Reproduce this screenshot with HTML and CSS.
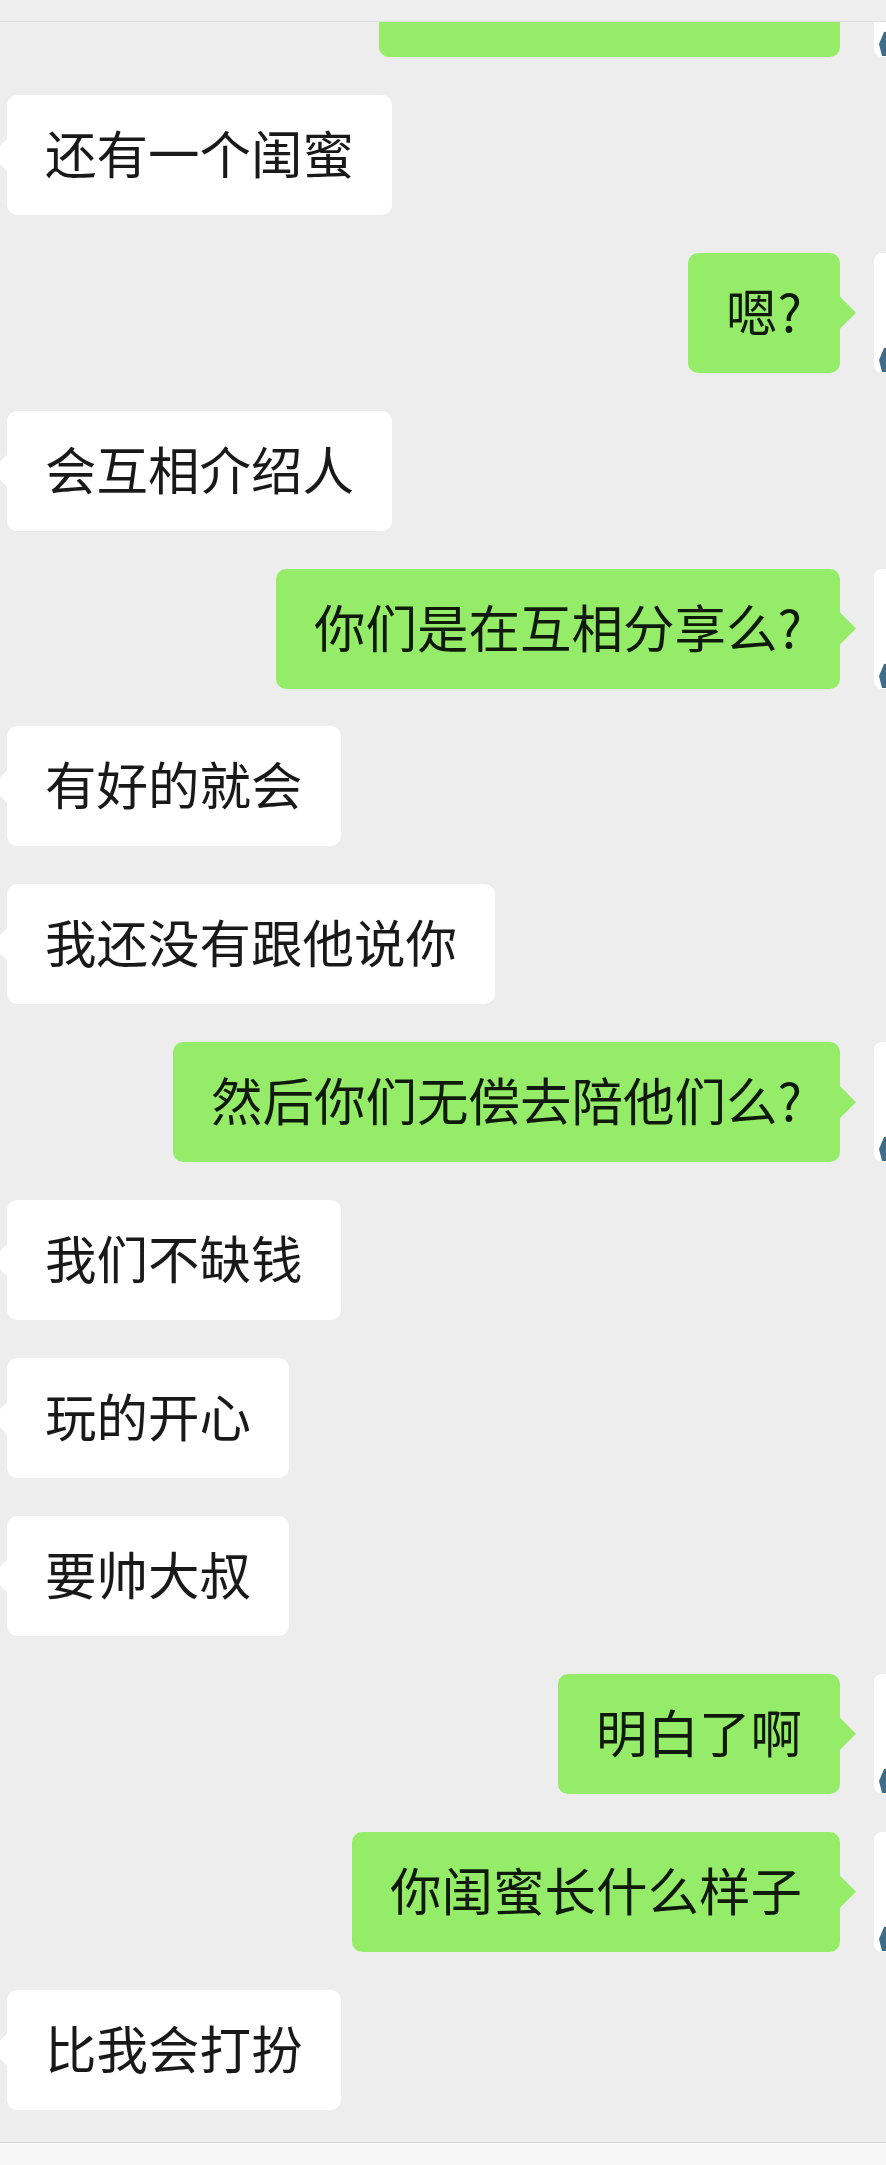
FILE: index.html
```html
<!DOCTYPE html>
<html lang="zh-CN">
<head>
    <meta charset="UTF-8">
    <title>聊天</title>
    <link rel="stylesheet" href="styles.css">
</head>
<body>

<div class="top-bar"></div>

<div class="viewport">
    <div class="chat">
        <div class="row me">
            <div class="bubble">是啊，你猜猜呢?</div>
            <div class="avatar"><svg viewBox="0 0 120 120"><rect width="120" height="120" rx="8" fill="#fff"/><polygon points="5,107 10,95 21,93 25,106 19,119 8,119" fill="#3f6c88"/></svg></div>
        </div>
        <div class="row">
            <div class="bubble">还有一个闺蜜</div>
        </div>
        <div class="row me">
            <div class="bubble">嗯?</div>
            <div class="avatar"><svg viewBox="0 0 120 120"><rect width="120" height="120" rx="8" fill="#fff"/><polygon points="5,107 10,95 21,93 25,106 19,119 8,119" fill="#3f6c88"/></svg></div>
        </div>
        <div class="row">
            <div class="bubble">会互相介绍人</div>
        </div>
        <div class="row me">
            <div class="bubble">你们是在互相分享么?</div>
            <div class="avatar"><svg viewBox="0 0 120 120"><rect width="120" height="120" rx="8" fill="#fff"/><polygon points="5,107 10,95 21,93 25,106 19,119 8,119" fill="#3f6c88"/></svg></div>
        </div>
        <div class="row">
            <div class="bubble">有好的就会</div>
        </div>
        <div class="row">
            <div class="bubble">我还没有跟他说你</div>
        </div>
        <div class="row me">
            <div class="bubble">然后你们无偿去陪他们么?</div>
            <div class="avatar"><svg viewBox="0 0 120 120"><rect width="120" height="120" rx="8" fill="#fff"/><polygon points="5,107 10,95 21,93 25,106 19,119 8,119" fill="#3f6c88"/></svg></div>
        </div>
        <div class="row">
            <div class="bubble">我们不缺钱</div>
        </div>
        <div class="row">
            <div class="bubble">玩的开心</div>
        </div>
        <div class="row">
            <div class="bubble">要帅大叔</div>
        </div>
        <div class="row me">
            <div class="bubble">明白了啊</div>
            <div class="avatar"><svg viewBox="0 0 120 120"><rect width="120" height="120" rx="8" fill="#fff"/><polygon points="5,107 10,95 21,93 25,106 19,119 8,119" fill="#3f6c88"/></svg></div>
        </div>
        <div class="row me">
            <div class="bubble">你闺蜜长什么样子</div>
            <div class="avatar"><svg viewBox="0 0 120 120"><rect width="120" height="120" rx="8" fill="#fff"/><polygon points="5,107 10,95 21,93 25,106 19,119 8,119" fill="#3f6c88"/></svg></div>
        </div>
        <div class="row">
            <div class="bubble">比我会打扮</div>
        </div>
    </div>
</div>

<div class="input-bar"></div>

</body>
</html>
```

FILE: styles.css
```css
* {
    margin: 0;
    padding: 0;
    box-sizing: border-box;
}

html, body {
    width: 886px;
    height: 2165px;
    overflow: hidden;
}

body {
    display: flex;
    flex-direction: column;
    background-color: #ededed;
    font-family: "Noto Sans CJK SC", "Noto Sans", sans-serif;
}

/* 顶部标题栏，只露出一点 */
.top-bar {
    flex-shrink: 0;
    height: 22px;
    background-color: #efefef;
    border-bottom: 1px solid #dedede;
}

/* 聊天区域，上面一条消息被标题栏挡住 */
.viewport {
    flex: 1;
    overflow: hidden;
}

.chat {
    display: flex;
    flex-direction: column;
    gap: 37.9px;
    margin-top: -85px;
}

.row {
    display: flex;
    align-items: flex-start;
    padding-left: 7px;
}

.row.me {
    justify-content: flex-end;
    padding-left: 0;
    margin-right: -108px;
}

.bubble {
    position: relative;
    height: 120px;
    padding: 27px 38px 33px;
    line-height: 60px;
    font-size: 51.5px;
    color: #191919;
    background-color: #ffffff;
    border-radius: 10px;
    white-space: nowrap;
}

/* 气泡的小尖角 */
.bubble::before {
    content: "";
    position: absolute;
    top: 43px;
    left: -16px;
    width: 17px;
    height: 34px;
    background-color: inherit;
    clip-path: polygon(100% 0, 0 50%, 100% 100%);
}

.me .bubble {
    background-color: #95ec69;
    color: #0f1a0a;
}

.me .bubble::before {
    left: auto;
    right: -16px;
    clip-path: polygon(0 0, 100% 50%, 0 100%);
}

.avatar {
    width: 120px;
    height: 120px;
    margin-left: 34px;
    flex-shrink: 0;
}

.avatar svg {
    display: block;
    width: 120px;
    height: 120px;
}

.input-bar {
    flex-shrink: 0;
    height: 23px;
    background-color: #f7f7f7;
    border-top: 1px solid #d6d6d6;
}
```
